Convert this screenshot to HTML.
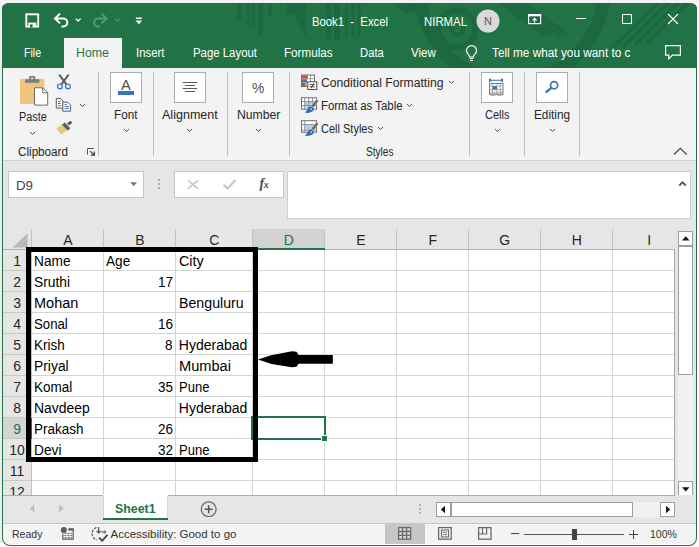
<!DOCTYPE html>
<html>
<head>
<meta charset="utf-8">
<title>Book1 - Excel</title>
<style>
*{box-sizing:border-box;margin:0;padding:0}
html,body{width:699px;height:547px;overflow:hidden;background:#fefefe;font-family:"Liberation Sans",sans-serif;}
#top{position:absolute;left:0;top:0;width:699px;height:3px;background:#f3f3f3}
#lft{position:absolute;left:0;top:3px;width:3px;height:540px;background:#eeeeee}
#clip{position:absolute;left:2px;top:3px;width:695px;height:543px;border-radius:6px 6px 8px 8px;overflow:hidden;}
#in{position:absolute;left:-2px;top:-3px;width:699px;height:547px}
#frame{position:absolute;left:2px;top:3px;width:695px;height:543px;border-radius:6px 6px 8px 8px;border:1px solid #217346;border-top-color:transparent}
.a{position:absolute;display:block}
.t{position:absolute;white-space:pre;line-height:1;transform-origin:0 0}
</style>
</head>
<body>
<div id="top"></div><div id="lft"></div>
<div id="clip"><div id="in">
<div class="a" style="left:2px;top:3px;width:695px;height:543px;background:#e6e6e6;"></div>
<div class="a" style="left:2px;top:3px;width:695px;height:65px;background:#217346;"></div>
<svg class="a" style="left:230px;top:3px" width="467" height="65" viewBox="230 3 467 65">
<g fill="#1d683f">
<rect x="237.500" y="3" width="4" height="17"/><rect x="247" y="3" width="3" height="24"/>
<rect x="252" y="3" width="3" height="22"/><rect x="258.500" y="3" width="4.500" height="33"/>
<rect x="268" y="3" width="3.500" height="13"/>
<path d="M287 3h19v34l-13-23h-6z"/>
<rect x="326" y="3" width="5" height="37"/><rect x="334" y="3" width="6" height="37"/>
<rect x="345" y="3" width="2.500" height="35"/><rect x="351.500" y="3" width="3" height="34"/><rect x="357" y="3" width="3.500" height="34"/>
<circle cx="409" cy="0" r="13.500"/>
</g>
<g fill="none" stroke="#1d683f">
<circle cx="457" cy="29" r="18.500" stroke-width="6"/>
<circle cx="457" cy="29" r="6" stroke-width="4.500"/>
<circle cx="512" cy="-10" r="92" stroke-width="13"/>
</g>
<g stroke="#1d683f" stroke-width="3.800">
<line x1="497" y1="0" x2="545" y2="35"/><line x1="504.500" y1="0" x2="552.500" y2="35"/><line x1="512" y1="0" x2="560" y2="35"/><line x1="519.500" y1="0" x2="567.500" y2="35"/>
<line x1="693" y1="-2" x2="647" y2="43"/><line x1="683" y1="-2" x2="635" y2="45"/>
<line x1="673" y1="-2" x2="623" y2="47"/><line x1="663" y1="-2" x2="611" y2="49"/>
</g>
</svg>
<div class="a" style="left:64px;top:38px;width:58px;height:31px;background:#f3f3f3;"></div>
<svg class="a" style="left:24px;top:12px" width="17" height="17" viewBox="24 12 17 17">
<rect x="26.300" y="14.300" width="11.900" height="12.300" fill="none" stroke="#fff" stroke-width="1.900"/>
<rect x="28.300" y="22.600" width="8" height="4.500" fill="#fff"/>
<rect x="30" y="24.400" width="2.600" height="3" fill="#217346"/>
</svg>
<svg class="a" style="left:52px;top:11px" width="19" height="18" viewBox="52 11 19 18">
<path d="M55.500 18.500h7.800a4 4 0 0 1 0 8h-1.800" fill="none" stroke="#fff" stroke-width="2"/>
<path d="M60 13.600L55 18.500L60 23.400" fill="none" stroke="#fff" stroke-width="2"/>
</svg>
<svg class="a" style="left:74px;top:17px" width="9" height="6" viewBox="74 17 9 6"><path d="M75.800 18.700L78.200 21L80.600 18.700" fill="none" stroke="#fff" stroke-width="1.300"/></svg>
<svg class="a" style="left:91px;top:11px" width="19" height="18" viewBox="91 11 19 18">
<path d="M106 18.500h-7.800a4 4 0 0 0 0 8h1.800" fill="none" stroke="#589a78" stroke-width="2"/>
<path d="M101.500 13.600L106.500 18.500L101.500 23.400" fill="none" stroke="#589a78" stroke-width="2"/>
</svg>
<svg class="a" style="left:113px;top:17px" width="9" height="6" viewBox="113 17 9 6"><path d="M115.100 18.700L117.500 21L119.900 18.700" fill="none" stroke="#4c8f6c" stroke-width="1.300"/></svg>
<svg class="a" style="left:134px;top:16px" width="10" height="9" viewBox="134 16 10 9"><rect x="135.800" y="17.500" width="6" height="1.500" fill="#fff"/><path d="M135.600 20.600h6.400L138.800 24.200z" fill="#fff"/></svg>
<div class="t" style="left:311.50px;top:16.00px;font-size:12px;color:#fff;transform:scaleX(0.9418);">Book1  -  Excel</div>
<div class="t" style="left:423.50px;top:16.00px;font-size:12px;color:#fff;transform:scaleX(0.9485);">NIRMAL</div>
<svg class="a" style="left:476px;top:9px" width="24" height="24" viewBox="0 0 24 24"><circle cx="12" cy="12" r="11.5" fill="#d9d9d9"/></svg>
<div class="t" style="left:484.03px;top:15.50px;font-size:11px;color:#5a5a5a;">N</div>
<svg class="a" style="left:527px;top:13px" width="16" height="12" viewBox="527 13 16 12"><rect x="528.600" y="14.600" width="12" height="9" fill="none" stroke="#fff" stroke-width="1.200"/><rect x="528" y="14" width="13.200" height="2.300" fill="#fff"/><path d="M534.600 22.500V18.500M532.600 20.300L534.600 18.300L536.600 20.300" fill="none" stroke="#fff" stroke-width="1.200"/></svg>
<div class="a" style="left:576px;top:18px;width:10px;height:1px;background:#fff;"></div>
<div class="a" style="left:622px;top:14px;width:10px;height:10px;border:1px solid #fff;"></div>
<svg class="a" style="left:667px;top:13px" width="12" height="12" viewBox="0 0 12 12"><path d="M1 1L11 11M11 1L1 11" stroke="#fff" stroke-width="1.1" fill="none"/></svg>
<div class="t" style="left:23.80px;top:47.00px;font-size:12px;color:#fff;transform:scaleX(0.8794);">File</div>
<div class="t" style="left:76.00px;top:47.00px;font-size:12px;color:#217346;transform:scaleX(1.0245);">Home</div>
<div class="t" style="left:136.00px;top:47.00px;font-size:12px;color:#fff;transform:scaleX(0.9496);">Insert</div>
<div class="t" style="left:192.50px;top:47.00px;font-size:12px;color:#fff;transform:scaleX(0.9497);">Page Layout</div>
<div class="t" style="left:284.40px;top:47.00px;font-size:12px;color:#fff;transform:scaleX(0.9717);">Formulas</div>
<div class="t" style="left:360.00px;top:47.00px;font-size:12px;color:#fff;transform:scaleX(0.9386);">Data</div>
<div class="t" style="left:411.00px;top:47.00px;font-size:12px;color:#fff;transform:scaleX(0.9681);">View</div>
<svg class="a" style="left:464px;top:43px" width="15" height="20" viewBox="464 43 15 20"><path d="M469.600 57c0-1.300-0.400-1.800-1.300-2.600a5 5 0 1 1 6.400 0c-0.900 0.800-1.300 1.300-1.300 2.600z" fill="none" stroke="#fff" stroke-width="1.200"/><path d="M469.600 58.500h3.800M470 60.500h3" stroke="#fff" stroke-width="1.200"/></svg>
<div class="t" style="left:491.50px;top:47.00px;font-size:12px;color:#fff;transform:scaleX(0.9841);">Tell me what you want to c</div>
<svg class="a" style="left:663px;top:43px" width="20" height="18" viewBox="663 43 20 18"><path d="M665.600 45.600h14.800v9.600h-8l-3.600 3.600v-3.600h-3.200z" fill="none" stroke="#fff" stroke-width="1.200"/></svg>
<div class="a" style="left:2px;top:68px;width:695px;height:92px;background:#f3f3f3;"></div>
<div class="a" style="left:2px;top:160px;width:695px;height:1px;background:#d2d2d2;"></div>
<div class="a" style="left:98px;top:72px;width:1px;height:84px;background:#bebebe;"></div>
<div class="a" style="left:153px;top:72px;width:1px;height:84px;background:#bebebe;"></div>
<div class="a" style="left:227px;top:72px;width:1px;height:84px;background:#bebebe;"></div>
<div class="a" style="left:289px;top:72px;width:1px;height:84px;background:#bebebe;"></div>
<div class="a" style="left:469px;top:72px;width:1px;height:84px;background:#bebebe;"></div>
<div class="a" style="left:524px;top:72px;width:1px;height:84px;background:#bebebe;"></div>
<div class="a" style="left:579px;top:72px;width:1px;height:84px;background:#bebebe;"></div>
<svg class="a" style="left:18px;top:74px" width="32" height="34" viewBox="18 74 32 34">
<rect x="20" y="78.7" width="24.3" height="25.2" rx="1.6" fill="#eec57e"/>
<path d="M25 82.8v-2.6q0-1 1-1h3.2v-2q0-1.1 1.1-1.1h3.8q1.1 0 1.1 1.1v2h3.2q1 0 1 1v2.600z" fill="#7d7d7d"/>
<rect x="31.3" y="77.5" width="1.8" height="1.8" fill="#f3f3f3"/>
<path d="M34.5 87.8h8.2l5 5v12.300h-13.200z" fill="#fff" stroke="#6e6e6e" stroke-width="1"/>
<path d="M42.7 87.8v5h5" fill="none" stroke="#6e6e6e" stroke-width="1"/>
</svg>
<div class="t" style="left:18.50px;top:111.00px;font-size:12px;color:#262626;transform:scaleX(0.9060);">Paste</div>
<svg class="a" style="left:28.5px;top:130.5px" width="7" height="5" viewBox="0 0 7 5"><path d="M0.9 1L3.5 3.4L6.1 1" fill="none" stroke="#505050" stroke-width="1"/></svg>
<svg class="a" style="left:54px;top:72px" width="20" height="20" viewBox="54 72 20 20">
<path d="M59.2 74.6L66.6 84.6M68.6 74.6L61.2 84.6" stroke="#5a5a5a" stroke-width="1.9" fill="none"/>
<circle cx="59.9" cy="86.4" r="2.4" fill="none" stroke="#3474c0" stroke-width="1.2"/>
<circle cx="67.9" cy="86.4" r="2.4" fill="none" stroke="#3474c0" stroke-width="1.2"/>
</svg>
<svg class="a" style="left:54px;top:96px" width="20" height="18" viewBox="54 96 20 18">
<path d="M56.3 98.5h4.2l2.6 2.6v7h-6.8z" fill="#fff" stroke="#5a5a5a" stroke-width="1"/>
<path d="M62.8 102.2h4.8l3 3v6h-7.8z" fill="#fff" stroke="#5a5a5a" stroke-width="1"/>
<path d="M58 101.3h2.8M58 103.5h2.8M58 105.8h2.8" stroke="#3474c0" stroke-width="1"/>
<path d="M64.6 106.6h4.4M64.6 108.7h4.4M64.6 104.6h2.4" stroke="#3474c0" stroke-width="1"/>
</svg>
<svg class="a" style="left:78.5px;top:103px" width="7" height="5" viewBox="0 0 7 5"><path d="M0.9 1L3.5 3.4L6.1 1" fill="none" stroke="#505050" stroke-width="1"/></svg>
<svg class="a" style="left:54px;top:119px" width="20" height="18" viewBox="54 119 20 18">
<path d="M56.2 128.2L62.3 124.6L66.8 130.6L61.2 134.8z" fill="#eec57e"/>
<path d="M62 124.5L65 122.6L70.4 128.6L67.3 130.6z" fill="#5a5a5a"/>
<path d="M67 123.2L70.5 120.8L72.5 122.8L69 125.6z" fill="#5a5a5a"/>
</svg>
<div class="t" style="left:17.50px;top:146.00px;font-size:12px;color:#262626;transform:scaleX(0.9735);">Clipboard</div>
<svg class="a" style="left:86px;top:147px" width="10" height="10" viewBox="86 147 10 10"><path d="M87.500 154.600V148.500H93.800" fill="none" stroke="#555" stroke-width="1"/><path d="M90.200 151.200L94 155M90.800 155.300H94.300V151.600" fill="none" stroke="#333" stroke-width="1.100"/></svg>
<div class="a" style="left:110px;top:72px;width:32px;height:31px;background:#fff;border:1px solid #ababab;"></div>
<div class="t" style="left:121.40px;top:77.75px;font-size:14.5px;color:#505050;transform:scaleX(1.0133);">A</div>
<div class="a" style="left:118px;top:91px;width:16px;height:4px;background:#3c73b8;"></div>
<div class="t" style="left:114.40px;top:109.00px;font-size:12px;color:#262626;transform:scaleX(0.9745);">Font</div>
<svg class="a" style="left:122.6px;top:128.3px" width="7" height="5" viewBox="0 0 7 5"><path d="M0.9 1L3.5 3.4L6.1 1" fill="none" stroke="#505050" stroke-width="1"/></svg>
<div class="a" style="left:174px;top:72px;width:32px;height:31px;background:#fff;border:1px solid #ababab;"></div>
<svg class="a" style="left:180px;top:80px" width="20" height="14" viewBox="180 80 20 14"><path d="M182.700 82.5h14.600M185.200 85.5h9.800M182.700 88.5h14.600M185.200 91.5h9.800" stroke="#5a5a5a" stroke-width="1"/></svg>
<div class="t" style="left:162.20px;top:109.00px;font-size:12px;color:#262626;transform:scaleX(1.0456);">Alignment</div>
<svg class="a" style="left:186.3px;top:128.3px" width="7" height="5" viewBox="0 0 7 5"><path d="M0.9 1L3.5 3.4L6.1 1" fill="none" stroke="#505050" stroke-width="1"/></svg>
<div class="a" style="left:242px;top:72px;width:32px;height:31px;background:#fff;border:1px solid #ababab;"></div>
<div class="t" style="left:252.35px;top:80.00px;font-size:15px;color:#505050;transform:scaleX(0.9224);">%</div>
<div class="t" style="left:236.60px;top:109.00px;font-size:12px;color:#262626;transform:scaleX(1.0168);">Number</div>
<svg class="a" style="left:254.5px;top:128.3px" width="7" height="5" viewBox="0 0 7 5"><path d="M0.9 1L3.5 3.4L6.1 1" fill="none" stroke="#505050" stroke-width="1"/></svg>
<svg class="a" style="left:300px;top:73px" width="19" height="18" viewBox="300 73 19 18">
<rect x="301.5" y="75" width="13" height="11.5" fill="#fff" stroke="#6e6e6e" stroke-width="1"/>
<path d="M306.200 75v11.500M310.500 75v11.500M301.500 78.700h13M301.500 82.500h13" stroke="#8a8a8a" stroke-width="0.8"/>
<rect x="302" y="75.500" width="5.800" height="2.800" fill="#d6492a"/>
<rect x="302" y="79.200" width="5" height="2.800" fill="#3c73b8"/>
<rect x="302" y="83" width="3.600" height="3" fill="#d6492a"/>
<rect x="307.800" y="81.800" width="9" height="7.700" fill="#fff" stroke="#4a4a4a" stroke-width="1"/>
<path d="M309.800 84.600h5M309.800 86.800h5M313.600 83.300l-2.400 5" stroke="#333" stroke-width="0.9"/>
</svg>
<svg class="a" style="left:300px;top:96px" width="19" height="18" viewBox="300 96 19 18">
<rect x="301.500" y="97.7" width="15" height="11.500" fill="#fff" stroke="#6e6e6e" stroke-width="1"/>
<rect x="305.200" y="101.9" width="7.400" height="7" fill="#b9cfe8"/><path d="M304.700 97.7v11.500M308.700 97.7v11.500M312.600 97.7v11.500M301.500 101.5h15M301.500 105.5h15" stroke="#8a8a8a" stroke-width="0.9"/>
<path d="M316.800 98.8l1.700 2.200l-4.600 6.600l-2.900-1.900z" fill="#6a6a6a" stroke="#f3f3f3" stroke-width="0.5"/>
<path d="M311 106.2l2.700 1.900c0.600 3.400-2.800 5.400-9 4.700c2.400-1.400 2.500-5.600 6.300-6.600z" fill="#2f6db5"/>
<circle cx="311.300" cy="109.2" r="0.9" fill="#b9cfe8"/>
</svg>
<svg class="a" style="left:300px;top:119px" width="19" height="18" viewBox="300 119 19 18">
<rect x="301.500" y="120.7" width="15" height="11.500" fill="#fff" stroke="#6e6e6e" stroke-width="1"/>
<rect x="305.200" y="125.0" width="8.200" height="5" fill="#b9cfe8"/><path d="M304.700 120.7v11.500M301.500 124.5h15M301.500 130.3h15" stroke="#8a8a8a" stroke-width="0.9"/>
<path d="M316.800 121.8l1.700 2.200l-4.600 6.600l-2.900-1.900z" fill="#6a6a6a" stroke="#f3f3f3" stroke-width="0.5"/>
<path d="M311 129.2l2.700 1.900c0.600 3.400-2.800 5.400-9 4.700c2.400-1.400 2.500-5.600 6.300-6.600z" fill="#2f6db5"/>
<circle cx="311.300" cy="132.2" r="0.9" fill="#b9cfe8"/>
</svg>
<div class="t" style="left:320.50px;top:77.00px;font-size:12px;color:#262626;transform:scaleX(1.0146);">Conditional Formatting</div>
<svg class="a" style="left:447.5px;top:80px" width="7" height="5" viewBox="0 0 7 5"><path d="M0.9 1L3.5 3.4L6.1 1" fill="none" stroke="#505050" stroke-width="1"/></svg>
<div class="t" style="left:320.50px;top:100.00px;font-size:12px;color:#262626;transform:scaleX(0.9498);">Format as Table</div>
<svg class="a" style="left:405.8px;top:103px" width="7" height="5" viewBox="0 0 7 5"><path d="M0.9 1L3.5 3.4L6.1 1" fill="none" stroke="#505050" stroke-width="1"/></svg>
<div class="t" style="left:320.50px;top:123.00px;font-size:12px;color:#262626;transform:scaleX(0.9173);">Cell Styles</div>
<svg class="a" style="left:376.5px;top:126px" width="7" height="5" viewBox="0 0 7 5"><path d="M0.9 1L3.5 3.4L6.1 1" fill="none" stroke="#505050" stroke-width="1"/></svg>
<div class="t" style="left:365.50px;top:146.00px;font-size:12px;color:#262626;transform:scaleX(0.8416);">Styles</div>
<div class="a" style="left:481px;top:72px;width:32px;height:31px;background:#fff;border:1px solid #ababab;"></div>
<svg class="a" style="left:487px;top:77px" width="19" height="20" viewBox="487 77 19 20">
<path d="M489.500 80.300h13M489.500 78.500v3.600M502.500 78.500v3.600M491.300 78.900l-1.800 1.400l1.800 1.400M500.700 78.900l1.800 1.400l-1.800 1.400" stroke="#3c73b8" stroke-width="1" fill="none"/>
<rect x="489.500" y="83.500" width="13.500" height="10.500" fill="#fff" stroke="#7a7a7a" stroke-width="1"/>
<path d="M492.400 83.500v10.500M496.900 83.500v10.500M500.300 83.500v10.500M489.500 86h13.500M489.500 89.500h13.500M489.500 92h13.500" stroke="#9a9a9a" stroke-width="0.8"/>
<rect x="492.600" y="86.200" width="4.300" height="3.300" fill="#3c73b8"/>
<path d="M489.500 94.500q3.300 1.800 6.700 0q3.400 1.800 6.800 0" stroke="#7a7a7a" stroke-width="0.9" fill="none"/>
</svg>
<div class="t" style="left:484.60px;top:109.00px;font-size:12px;color:#262626;transform:scaleX(0.9147);">Cells</div>
<svg class="a" style="left:493.5px;top:128.3px" width="7" height="5" viewBox="0 0 7 5"><path d="M0.9 1L3.5 3.4L6.1 1" fill="none" stroke="#505050" stroke-width="1"/></svg>
<div class="a" style="left:536px;top:72px;width:32px;height:31px;background:#fff;border:1px solid #ababab;"></div>
<svg class="a" style="left:543px;top:78px" width="18" height="17" viewBox="543 78 18 17"><circle cx="554.1" cy="85.2" r="3.600" fill="#fff" stroke="#3c73b8" stroke-width="1.700"/><path d="M551.200 88.100L546.300 91.800" stroke="#3c73b8" stroke-width="2.300" stroke-linecap="round"/></svg>
<div class="t" style="left:533.50px;top:109.00px;font-size:12px;color:#262626;transform:scaleX(0.9838);">Editing</div>
<svg class="a" style="left:548.5px;top:128.3px" width="7" height="5" viewBox="0 0 7 5"><path d="M0.9 1L3.5 3.4L6.1 1" fill="none" stroke="#505050" stroke-width="1"/></svg>
<svg class="a" style="left:673px;top:147px" width="15" height="9" viewBox="0 0 15 9"><path d="M1 7.5L7.3 1.3L13.6 7.5" fill="none" stroke="#444" stroke-width="1.2"/></svg>
<div class="a" style="left:8px;top:171px;width:136px;height:27px;background:#fff;border:1px solid #c6c6c6;"></div>
<div class="t" style="left:15.60px;top:179.00px;font-size:13px;color:#444;transform:scaleX(1.0232);">D9</div>
<svg class="a" style="left:130px;top:182px" width="8" height="5" viewBox="0 0 8 5"><path d="M0.300 0.200h6.800L3.700 4.300z" fill="#777"/></svg>
<div class="a" style="left:158px;top:179px;width:2px;height:2px;background:#ababab;"></div>
<div class="a" style="left:158px;top:183px;width:2px;height:2px;background:#ababab;"></div>
<div class="a" style="left:158px;top:187px;width:2px;height:2px;background:#ababab;"></div>
<div class="a" style="left:174px;top:171px;width:110px;height:27px;background:#fff;border:1px solid #c6c6c6;"></div>
<svg class="a" style="left:186px;top:178px" width="14" height="13" viewBox="186 178 14 13"><path d="M188 180.200l10 8.600M198 180.200l-10 8.600" stroke="#c0c0c0" stroke-width="1.500" fill="none"/></svg>
<svg class="a" style="left:221px;top:178px" width="17" height="13" viewBox="221 178 17 13"><path d="M223.500 184.800l4 3.600L235.500 180" stroke="#c6c6c6" stroke-width="2.200" fill="none"/></svg>
<div class="t" style="left:259.5px;top:176.500px;font-family:'Liberation Serif',serif;font-style:italic;font-weight:bold;font-size:14px;color:#4a4a4a;letter-spacing:-0.5px">f<span style="font-size:10px;position:relative;top:0px">x</span></div>
<div class="a" style="left:287px;top:171px;width:404px;height:48px;background:#fff;border:1px solid #cfcfcf;"></div>
<svg class="a" style="left:678px;top:180px" width="9" height="7" viewBox="0 0 9 7"><path d="M1.300 5.500L4.500 2.200L7.700 5.500" fill="none" stroke="#555" stroke-width="1.800"/></svg>
<div class="a" style="left:32px;top:250px;width:642px;height:245px;background:#fff;"></div>
<svg class="a" style="left:9px;top:233px" width="20" height="15" viewBox="0 0 20 15"><path d="M18.5 0.5v14h-15z" fill="#b9b9b9"/></svg>
<div class="a" style="left:252px;top:229px;width:73px;height:20px;background:#d2d2d2;"></div>
<div class="a" style="left:252px;top:248px;width:73px;height:2px;background:#217346;"></div>
<div class="t" style="left:63.13px;top:233.00px;font-size:14px;color:#262626;">A</div>
<div class="t" style="left:135.13px;top:233.00px;font-size:14px;color:#262626;">B</div>
<div class="t" style="left:209.25px;top:233.00px;font-size:14px;color:#262626;">C</div>
<div class="t" style="left:283.75px;top:233.00px;font-size:14px;color:#217346;">D</div>
<div class="t" style="left:356.13px;top:233.00px;font-size:14px;color:#262626;">E</div>
<div class="t" style="left:428.52px;top:233.00px;font-size:14px;color:#262626;">F</div>
<div class="t" style="left:499.35px;top:233.00px;font-size:14px;color:#262626;">G</div>
<div class="t" style="left:571.75px;top:233.00px;font-size:14px;color:#262626;">H</div>
<div class="t" style="left:647.35px;top:233.00px;font-size:14px;color:#262626;">I</div>
<div class="a" style="left:31px;top:229px;width:1px;height:20px;background:#c2c2c2;"></div>
<div class="a" style="left:103px;top:229px;width:1px;height:20px;background:#c2c2c2;"></div>
<div class="a" style="left:175px;top:229px;width:1px;height:20px;background:#c2c2c2;"></div>
<div class="a" style="left:252px;top:229px;width:1px;height:20px;background:#c2c2c2;"></div>
<div class="a" style="left:324px;top:229px;width:1px;height:20px;background:#c2c2c2;"></div>
<div class="a" style="left:396px;top:229px;width:1px;height:20px;background:#c2c2c2;"></div>
<div class="a" style="left:468px;top:229px;width:1px;height:20px;background:#c2c2c2;"></div>
<div class="a" style="left:540px;top:229px;width:1px;height:20px;background:#c2c2c2;"></div>
<div class="a" style="left:612px;top:229px;width:1px;height:20px;background:#c2c2c2;"></div>
<div class="a" style="left:3px;top:249px;width:672px;height:1px;background:#b0b0b0;"></div>
<div class="a" style="left:252px;top:248px;width:73px;height:2px;background:#217346;"></div>
<div class="a" style="left:3px;top:250px;width:28px;height:245px;background:#e6e6e6;"></div>
<div class="a" style="left:3px;top:418px;width:28px;height:20px;background:#d4d4d4;"></div>
<div class="a" style="left:31px;top:250px;width:1px;height:245px;background:#c2c2c2;"></div>
<div class="a" style="left:30px;top:418px;width:2px;height:21px;background:#217346;"></div>
<div class="a" style="left:3px;top:270px;width:28px;height:1px;background:#c8c8c8;"></div>
<div class="a" style="left:32px;top:270px;width:642px;height:1px;background:#d4d4d4;"></div>
<div class="t" style="left:13.31px;top:254.00px;font-size:14px;color:#262626;">1</div>
<div class="a" style="left:3px;top:291px;width:28px;height:1px;background:#c8c8c8;"></div>
<div class="a" style="left:32px;top:291px;width:642px;height:1px;background:#d4d4d4;"></div>
<div class="t" style="left:13.31px;top:275.00px;font-size:14px;color:#262626;">2</div>
<div class="a" style="left:3px;top:312px;width:28px;height:1px;background:#c8c8c8;"></div>
<div class="a" style="left:32px;top:312px;width:642px;height:1px;background:#d4d4d4;"></div>
<div class="t" style="left:13.31px;top:296.00px;font-size:14px;color:#262626;">3</div>
<div class="a" style="left:3px;top:333px;width:28px;height:1px;background:#c8c8c8;"></div>
<div class="a" style="left:32px;top:333px;width:642px;height:1px;background:#d4d4d4;"></div>
<div class="t" style="left:13.31px;top:317.00px;font-size:14px;color:#262626;">4</div>
<div class="a" style="left:3px;top:354px;width:28px;height:1px;background:#c8c8c8;"></div>
<div class="a" style="left:32px;top:354px;width:642px;height:1px;background:#d4d4d4;"></div>
<div class="t" style="left:13.31px;top:338.00px;font-size:14px;color:#262626;">5</div>
<div class="a" style="left:3px;top:375px;width:28px;height:1px;background:#c8c8c8;"></div>
<div class="a" style="left:32px;top:375px;width:642px;height:1px;background:#d4d4d4;"></div>
<div class="t" style="left:13.31px;top:359.00px;font-size:14px;color:#262626;">6</div>
<div class="a" style="left:3px;top:396px;width:28px;height:1px;background:#c8c8c8;"></div>
<div class="a" style="left:32px;top:396px;width:642px;height:1px;background:#d4d4d4;"></div>
<div class="t" style="left:13.31px;top:380.00px;font-size:14px;color:#262626;">7</div>
<div class="a" style="left:3px;top:417px;width:28px;height:1px;background:#c8c8c8;"></div>
<div class="a" style="left:32px;top:417px;width:642px;height:1px;background:#d4d4d4;"></div>
<div class="t" style="left:13.31px;top:401.00px;font-size:14px;color:#262626;">8</div>
<div class="a" style="left:3px;top:438px;width:28px;height:1px;background:#c8c8c8;"></div>
<div class="a" style="left:32px;top:438px;width:642px;height:1px;background:#d4d4d4;"></div>
<div class="t" style="left:13.31px;top:422.00px;font-size:14px;color:#217346;">9</div>
<div class="a" style="left:3px;top:459px;width:28px;height:1px;background:#c8c8c8;"></div>
<div class="a" style="left:32px;top:459px;width:642px;height:1px;background:#d4d4d4;"></div>
<div class="t" style="left:9.22px;top:443.00px;font-size:14px;color:#262626;">10</div>
<div class="a" style="left:3px;top:480px;width:28px;height:1px;background:#c8c8c8;"></div>
<div class="a" style="left:32px;top:480px;width:642px;height:1px;background:#d4d4d4;"></div>
<div class="t" style="left:9.73px;top:464.00px;font-size:14px;color:#262626;">11</div>
<div class="a" style="left:3px;top:501px;width:28px;height:1px;background:#c8c8c8;"></div>
<div class="a" style="left:32px;top:501px;width:642px;height:1px;background:#d4d4d4;"></div>
<div class="t" style="left:9.22px;top:485.00px;font-size:14px;color:#262626;">12</div>
<div class="a" style="left:103px;top:250px;width:1px;height:245px;background:#d4d4d4;"></div>
<div class="a" style="left:175px;top:250px;width:1px;height:245px;background:#d4d4d4;"></div>
<div class="a" style="left:252px;top:250px;width:1px;height:245px;background:#d4d4d4;"></div>
<div class="a" style="left:324px;top:250px;width:1px;height:245px;background:#d4d4d4;"></div>
<div class="a" style="left:396px;top:250px;width:1px;height:245px;background:#d4d4d4;"></div>
<div class="a" style="left:468px;top:250px;width:1px;height:245px;background:#d4d4d4;"></div>
<div class="a" style="left:540px;top:250px;width:1px;height:245px;background:#d4d4d4;"></div>
<div class="a" style="left:612px;top:250px;width:1px;height:245px;background:#d4d4d4;"></div>
<div class="a" style="left:674px;top:249px;width:1px;height:247px;background:#a6a6a6;"></div>
<div class="t" style="left:34.20px;top:254.00px;font-size:14px;color:#000;transform:scaleX(0.9772);">Name</div>
<div class="t" style="left:106.20px;top:254.00px;font-size:14px;color:#000;transform:scaleX(0.9717);">Age</div>
<div class="t" style="left:178.80px;top:254.00px;font-size:14px;color:#000;transform:scaleX(1.0246);">City</div>
<div class="t" style="left:34.20px;top:275.00px;font-size:14px;color:#000;transform:scaleX(0.9845);">Sruthi</div>
<div class="t" style="left:157.90px;top:275.00px;font-size:14px;color:#000;transform:scaleX(0.9635);">17</div>
<div class="t" style="left:34.20px;top:296.00px;font-size:14px;color:#000;transform:scaleX(1.0348);">Mohan</div>
<div class="t" style="left:178.80px;top:296.00px;font-size:14px;color:#000;transform:scaleX(1.0137);">Benguluru</div>
<div class="t" style="left:34.20px;top:317.00px;font-size:14px;color:#000;transform:scaleX(0.9438);">Sonal</div>
<div class="t" style="left:157.90px;top:317.00px;font-size:14px;color:#000;transform:scaleX(0.9635);">16</div>
<div class="t" style="left:34.20px;top:338.00px;font-size:14px;color:#000;transform:scaleX(0.9626);">Krish</div>
<div class="t" style="left:165.40px;top:338.00px;font-size:14px;color:#000;transform:scaleX(0.9635);">8</div>
<div class="t" style="left:178.80px;top:338.00px;font-size:14px;color:#000;">Hyderabad</div>
<div class="t" style="left:34.20px;top:359.00px;font-size:14px;color:#000;transform:scaleX(0.9910);">Priyal</div>
<div class="t" style="left:178.80px;top:359.00px;font-size:14px;color:#000;transform:scaleX(1.0442);">Mumbai</div>
<div class="t" style="left:34.20px;top:380.00px;font-size:14px;color:#000;transform:scaleX(0.9650);">Komal</div>
<div class="t" style="left:157.90px;top:380.00px;font-size:14px;color:#000;transform:scaleX(0.9635);">35</div>
<div class="t" style="left:178.80px;top:380.00px;font-size:14px;color:#000;transform:scaleX(0.9299);">Pune</div>
<div class="t" style="left:34.20px;top:401.00px;font-size:14px;color:#000;transform:scaleX(0.9939);">Navdeep</div>
<div class="t" style="left:178.80px;top:401.00px;font-size:14px;color:#000;">Hyderabad</div>
<div class="t" style="left:34.20px;top:422.00px;font-size:14px;color:#000;transform:scaleX(0.9659);">Prakash</div>
<div class="t" style="left:157.90px;top:422.00px;font-size:14px;color:#000;transform:scaleX(0.9635);">26</div>
<div class="t" style="left:34.20px;top:443.00px;font-size:14px;color:#000;transform:scaleX(0.9817);">Devi</div>
<div class="t" style="left:157.90px;top:443.00px;font-size:14px;color:#000;transform:scaleX(0.9635);">32</div>
<div class="t" style="left:178.80px;top:443.00px;font-size:14px;color:#000;transform:scaleX(0.9299);">Pune</div>
<div class="a" style="left:251px;top:416px;width:75px;height:24px;border:2px solid #217346;"></div>
<div class="a" style="left:321px;top:435px;width:7px;height:7px;background:#fff;"></div>
<div class="a" style="left:322px;top:436px;width:5px;height:5px;background:#217346;"></div>
<div class="a" style="left:26.3px;top:247px;width:231.7px;height:215px;border:5px solid #000;"></div>
<svg class="a" style="left:255px;top:347px" width="82" height="24" viewBox="255 347 82 24"><path d="M258 359.400L271 355.300L292 351.300L296.500 351.800L298.600 354.900L332.800 354.900V363.800L298.600 363.800L296.500 366.800L292 367.200L271.500 363.900z" fill="#000"/></svg>
<div class="a" style="left:675px;top:230px;width:21px;height:266px;background:#e6e6e6;"></div>
<div class="a" style="left:678px;top:231px;width:15px;height:265px;background:#f1f1f1;"></div>
<div class="a" style="left:678px;top:231px;width:15px;height:15px;background:#fff;border:1px solid #9e9e9e;"></div>
<svg class="a" style="left:682px;top:236px" width="8" height="5" viewBox="0 0 8 5"><path d="M0 4.500L3.750 0.300L7.500 4.500z" fill="#111"/></svg>
<div class="a" style="left:678px;top:246px;width:15px;height:129px;background:#fff;border:1px solid #9e9e9e;"></div>
<div class="a" style="left:678px;top:481px;width:15px;height:15px;background:#fff;border:1px solid #9e9e9e;"></div>
<svg class="a" style="left:682px;top:487px" width="8" height="5" viewBox="0 0 8 5"><path d="M0 0.300L3.750 4.500L7.500 0.300z" fill="#111"/></svg>
<div class="a" style="left:3px;top:495px;width:693px;height:28px;background:#e6e6e6;"></div>
<div class="a" style="left:3px;top:495px;width:672px;height:1px;background:#ababab;"></div>
<div class="a" style="left:3px;top:523px;width:693px;height:1px;background:#c6c6c6;"></div>
<div class="a" style="left:3px;top:524px;width:693px;height:20px;background:#f3f3f3;"></div>
<div class="a" style="left:3px;top:544px;width:693px;height:1px;background:#fdfdfd;"></div>
<svg class="a" style="left:28px;top:503px" width="8" height="11" viewBox="28 503 8 11"><path d="M34.200 504.600v7.600L29.600 508.400z" fill="#bdbdbd"/></svg>
<svg class="a" style="left:57px;top:503px" width="8" height="11" viewBox="57 503 8 11"><path d="M59 504.600v7.600L63.600 508.400z" fill="#bdbdbd"/></svg>
<div class="a" style="left:103px;top:495px;width:65px;height:25px;background:#fff;"></div>
<div class="a" style="left:103px;top:518px;width:65px;height:2px;background:#217346;"></div>
<div class="a" style="left:103px;top:496px;width:1px;height:22px;background:#d6d6d6;"></div>
<div class="a" style="left:167px;top:496px;width:1px;height:22px;background:#d6d6d6;"></div>
<div class="t" style="left:115.00px;top:501.75px;font-size:13.5px;color:#217346;font-weight:bold;transform:scaleX(0.9149);">Sheet1</div>
<svg class="a" style="left:200px;top:500px" width="17" height="17" viewBox="0 0 17 17"><circle cx="8.700" cy="9.200" r="7.400" fill="none" stroke="#6a6a6a" stroke-width="1.300"/><path d="M8.700 5.200v8M4.700 9.200h8" stroke="#5a5a5a" stroke-width="1.600"/></svg>
<div class="a" style="left:419px;top:504px;width:2px;height:2px;background:#b4b4b4;"></div>
<div class="a" style="left:419px;top:508px;width:2px;height:2px;background:#b4b4b4;"></div>
<div class="a" style="left:419px;top:512px;width:2px;height:2px;background:#b4b4b4;"></div>
<div class="a" style="left:436px;top:502px;width:239px;height:15px;background:#f1f1f1;"></div>
<div class="a" style="left:436px;top:502px;width:15px;height:15px;background:#fff;border:1px solid #9e9e9e;"></div>
<svg class="a" style="left:440px;top:505px" width="6" height="9" viewBox="0 0 6 9"><path d="M5 0.800v7.400L0.800 4.500z" fill="#111"/></svg>
<div class="a" style="left:451px;top:502px;width:182px;height:15px;background:#fff;border:1px solid #9e9e9e;"></div>
<div class="a" style="left:660px;top:502px;width:15px;height:15px;background:#fff;border:1px solid #9e9e9e;"></div>
<svg class="a" style="left:665px;top:505px" width="6" height="9" viewBox="0 0 6 9"><path d="M1 0.800v7.400L5.200 4.500z" fill="#111"/></svg>
<div class="t" style="left:11.50px;top:529.25px;font-size:11.5px;color:#333;transform:scaleX(0.9174);">Ready</div>
<svg class="a" style="left:60px;top:526px" width="16" height="16" viewBox="60 526 16 16"><circle cx="63.800" cy="529.900" r="3" fill="#5e5e5e"/><rect x="68.300" y="528.200" width="5.500" height="2.500" fill="#5e5e5e"/><path d="M62.800 533.500v5.600h10.400v-9" fill="none" stroke="#5e5e5e" stroke-width="1.200"/><path d="M64.500 533.400h1.800M67.500 533.400h2M70.500 533.400h1.600M64.500 535.600h1.800M67.500 535.600h2M70.500 535.600h1.600M64.500 537.700h1.800M67.500 537.700h2M70.500 537.700h1.600" stroke="#5e5e5e" stroke-width="1"/></svg>
<svg class="a" style="left:90px;top:525px" width="20" height="18" viewBox="90 525 20 18"><path d="M98.700 527v5.600M96.600 530.800l2.100 2.100l2.100-2.100" fill="none" stroke="#444" stroke-width="1.100"/><path d="M101.500 532h4M104 530.300l1.700 1.700l-1.700 1.700" fill="none" stroke="#444" stroke-width="1"/><path d="M96.500 527.600a6.400 6.400 0 0 0 0.500 12.300" fill="none" stroke="#444" stroke-width="1.100" stroke-dasharray="2.600 1.300"/><path d="M99 537.700l3.200 3.100l5.200-6" fill="none" stroke="#444" stroke-width="1.800"/></svg>
<div class="t" style="left:110.50px;top:529.25px;font-size:11.5px;color:#333;">Accessibility: Good to go</div>
<div class="a" style="left:385px;top:524px;width:40px;height:20px;background:#c6c6c6;"></div>
<svg class="a" style="left:397px;top:526px" width="16" height="15" viewBox="397 526 16 15"><rect x="398.600" y="527.600" width="12" height="11.600" fill="#d8d8d8" stroke="#6a6a6a" stroke-width="1.300"/><path d="M402.600 527.600v11.600M406.600 527.600v11.600M398.600 531.500h12M398.600 535.400h12" stroke="#6a6a6a" stroke-width="1.300"/></svg>
<svg class="a" style="left:437px;top:526px" width="16" height="15" viewBox="437 526 16 15"><rect x="438.600" y="527.600" width="12.600" height="11.600" fill="none" stroke="#6a6a6a" stroke-width="1.300"/><rect x="441.500" y="530" width="7" height="7" fill="none" stroke="#6a6a6a" stroke-width="1.100"/><path d="M443 532.300h4M443 534.600h4" stroke="#6a6a6a" stroke-width="0.900"/></svg>
<svg class="a" style="left:477px;top:526px" width="16" height="15" viewBox="477 526 16 15"><rect x="478.600" y="527.600" width="12.400" height="11.600" fill="none" stroke="#6a6a6a" stroke-width="1.300"/><path d="M482.500 527.600v6.400M478.600 534h8v-6.400" fill="none" stroke="#6a6a6a" stroke-width="1.200"/></svg>
<div class="a" style="left:511px;top:533px;width:8px;height:1px;background:#444;"></div>
<div class="a" style="left:524px;top:534px;width:100px;height:1px;background:#555;"></div>
<div class="a" style="left:572px;top:529px;width:5px;height:11px;background:#444;"></div>
<div class="a" style="left:628.5px;top:534px;width:9px;height:1px;background:#444;"></div>
<div class="a" style="left:632.5px;top:530px;width:1px;height:9px;background:#444;"></div>
<div class="t" style="left:650.40px;top:529.25px;font-size:11.5px;color:#333;transform:scaleX(0.9178);">100%</div>
</div></div>
<div id="frame"></div>
</body>
</html>
